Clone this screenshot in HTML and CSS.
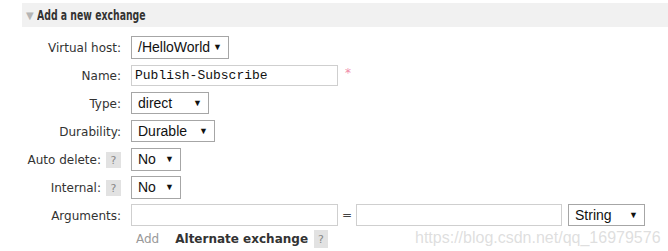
FILE: index.html
```html
<!DOCTYPE html>
<html>
<head>
<meta charset="utf-8">
<link rel="stylesheet" href="styles.css">
</head>
<body>
<div class="section">
  <h2 class="section-head"><span class="toggle">▼</span><span class="title">Add a new exchange</span></h2>
  <div class="form">
    <div class="row">
      <div class="label">Virtual host:</div>
      <div class="field"><div class="select w-vhost"><span>/HelloWorld</span><span class="arrow">▼</span></div></div>
    </div>
    <div class="row">
      <div class="label">Name:</div>
      <div class="field"><div class="input mono w-name">Publish-Subscribe</div><span class="req">*</span></div>
    </div>
    <div class="row">
      <div class="label">Type:</div>
      <div class="field"><div class="select w-type"><span>direct</span><span class="arrow">▼</span></div></div>
    </div>
    <div class="row">
      <div class="label">Durability:</div>
      <div class="field"><div class="select w-dur"><span>Durable</span><span class="arrow">▼</span></div></div>
    </div>
    <div class="row">
      <div class="label">Auto delete: <span class="help">?</span></div>
      <div class="field"><div class="select w-no"><span>No</span><span class="arrow">▼</span></div></div>
    </div>
    <div class="row">
      <div class="label">Internal: <span class="help">?</span></div>
      <div class="field"><div class="select w-no"><span>No</span><span class="arrow">▼</span></div></div>
    </div>
    <div class="row">
      <div class="label">Arguments:</div>
      <div class="field">
        <div class="input w-key"></div>
        <span class="eq">=</span>
        <div class="input w-val"></div>
        <div class="select w-str"><span>String</span><span class="arrow">▼</span></div>
      </div>
    </div>
    <div class="row row-add">
      <div class="label"></div>
      <div class="field add-field">
        <span class="add">Add</span>
        <span class="alt">Alternate exchange</span>
        <span class="help help-tall">?</span>
      </div>
    </div>
  </div>
</div>
<div class="watermark">https://blog.csdn.net/qq_16979576</div>
</body>
</html>
```

FILE: styles.css
```css
html, body {
  margin: 0;
  padding: 0;
  background: #fff;
}
body {
  font-family: "DejaVu Sans", Verdana, sans-serif;
  font-size: 12px;
  color: #333;
  width: 668px;
  height: 251px;
  overflow: hidden;
  position: relative;
}
.section {
  margin: 3px 0 0 22px;
}
.section-head {
  margin: 0;
  height: 24px;
  background: #f1f1f1;
  display: flex;
  align-items: center;
  padding-left: 4px;
  font-family: "DejaVu Sans", sans-serif;
  font-stretch: condensed;
  font-size: 12px;
  font-weight: bold;
  color: #333;
}
.title {
  display: inline-block;
  transform: scaleX(0.74);
  transform-origin: left center;
  font-size: 14px;
}
.toggle {
  font-size: 10px;
  color: #b5b5b5;
  width: 11px;
  font-weight: normal;
  font-stretch: normal;
}
.form {
  margin-top: 6px;
  display: flex;
  flex-direction: column;
}
.row {
  display: flex;
  height: 28px;
  align-items: center;
}
.label {
  width: 99px;
  text-align: right;
  white-space: nowrap;
  display: flex;
  justify-content: flex-end;
  align-items: center;
  color: #333;
  padding-top: 2px;
  box-sizing: border-box;
}
.field {
  margin-left: 10px;
  display: flex;
  align-items: center;
}
.select {
  box-sizing: border-box;
  height: 22px;
  border: 1px solid #a6a6a6;
  background: #fff;
  display: flex;
  align-items: center;
  justify-content: space-between;
  padding: 0 6px 0 6px;
  font-family: "Liberation Sans", Arial, sans-serif;
  font-size: 14px;
  color: #111;
}
.arrow {
  font-size: 9px;
  color: #111;
}
.w-vhost { width: 98px; height: 23px; }
.w-type { width: 78px; }
.w-dur { width: 84px; }
.w-no { width: 50px; height: 23px; }
.w-str { width: 77px; margin-left: 6px; }
.input {
  box-sizing: border-box;
  height: 21px;
  border: 1px solid #cfcfcf;
  background: #fff;
  display: flex;
  align-items: center;
  padding-left: 3px;
}
.mono {
  font-family: "Liberation Mono", "Courier New", monospace;
  font-size: 13px;
  color: #111;
}
.w-name { width: 207px; }
.w-key { width: 207px; height: 22px; }
.w-val { width: 206px; height: 22px; }
.req {
  color: #f08aa8;
  font-size: 12px;
  margin-left: 7px;
  margin-top: -4px;
}
.eq {
  width: 18px;
  text-align: center;
  color: #444;
}
.help {
  display: inline-flex;
  align-items: center;
  justify-content: center;
  width: 15px;
  height: 16px;
  background: #e2e2e2;
  color: #888;
  font-size: 11px;
  margin-left: 5px;
}
.help-tall {
  width: 14px;
  height: 18px;
  margin-left: 6px;
}
.row-add {
  height: 20px;
}
.add {
  color: #999;
  margin-left: 5px;
}
.alt {
  font-weight: bold;
  color: #333;
  margin-left: 16px;
}
.watermark {
  position: absolute;
  left: 415px;
  top: 229px;
  font-family: "Liberation Sans", Arial, sans-serif;
  font-size: 16px;
  color: rgba(205, 205, 205, 0.65);
  white-space: nowrap;
}
```
